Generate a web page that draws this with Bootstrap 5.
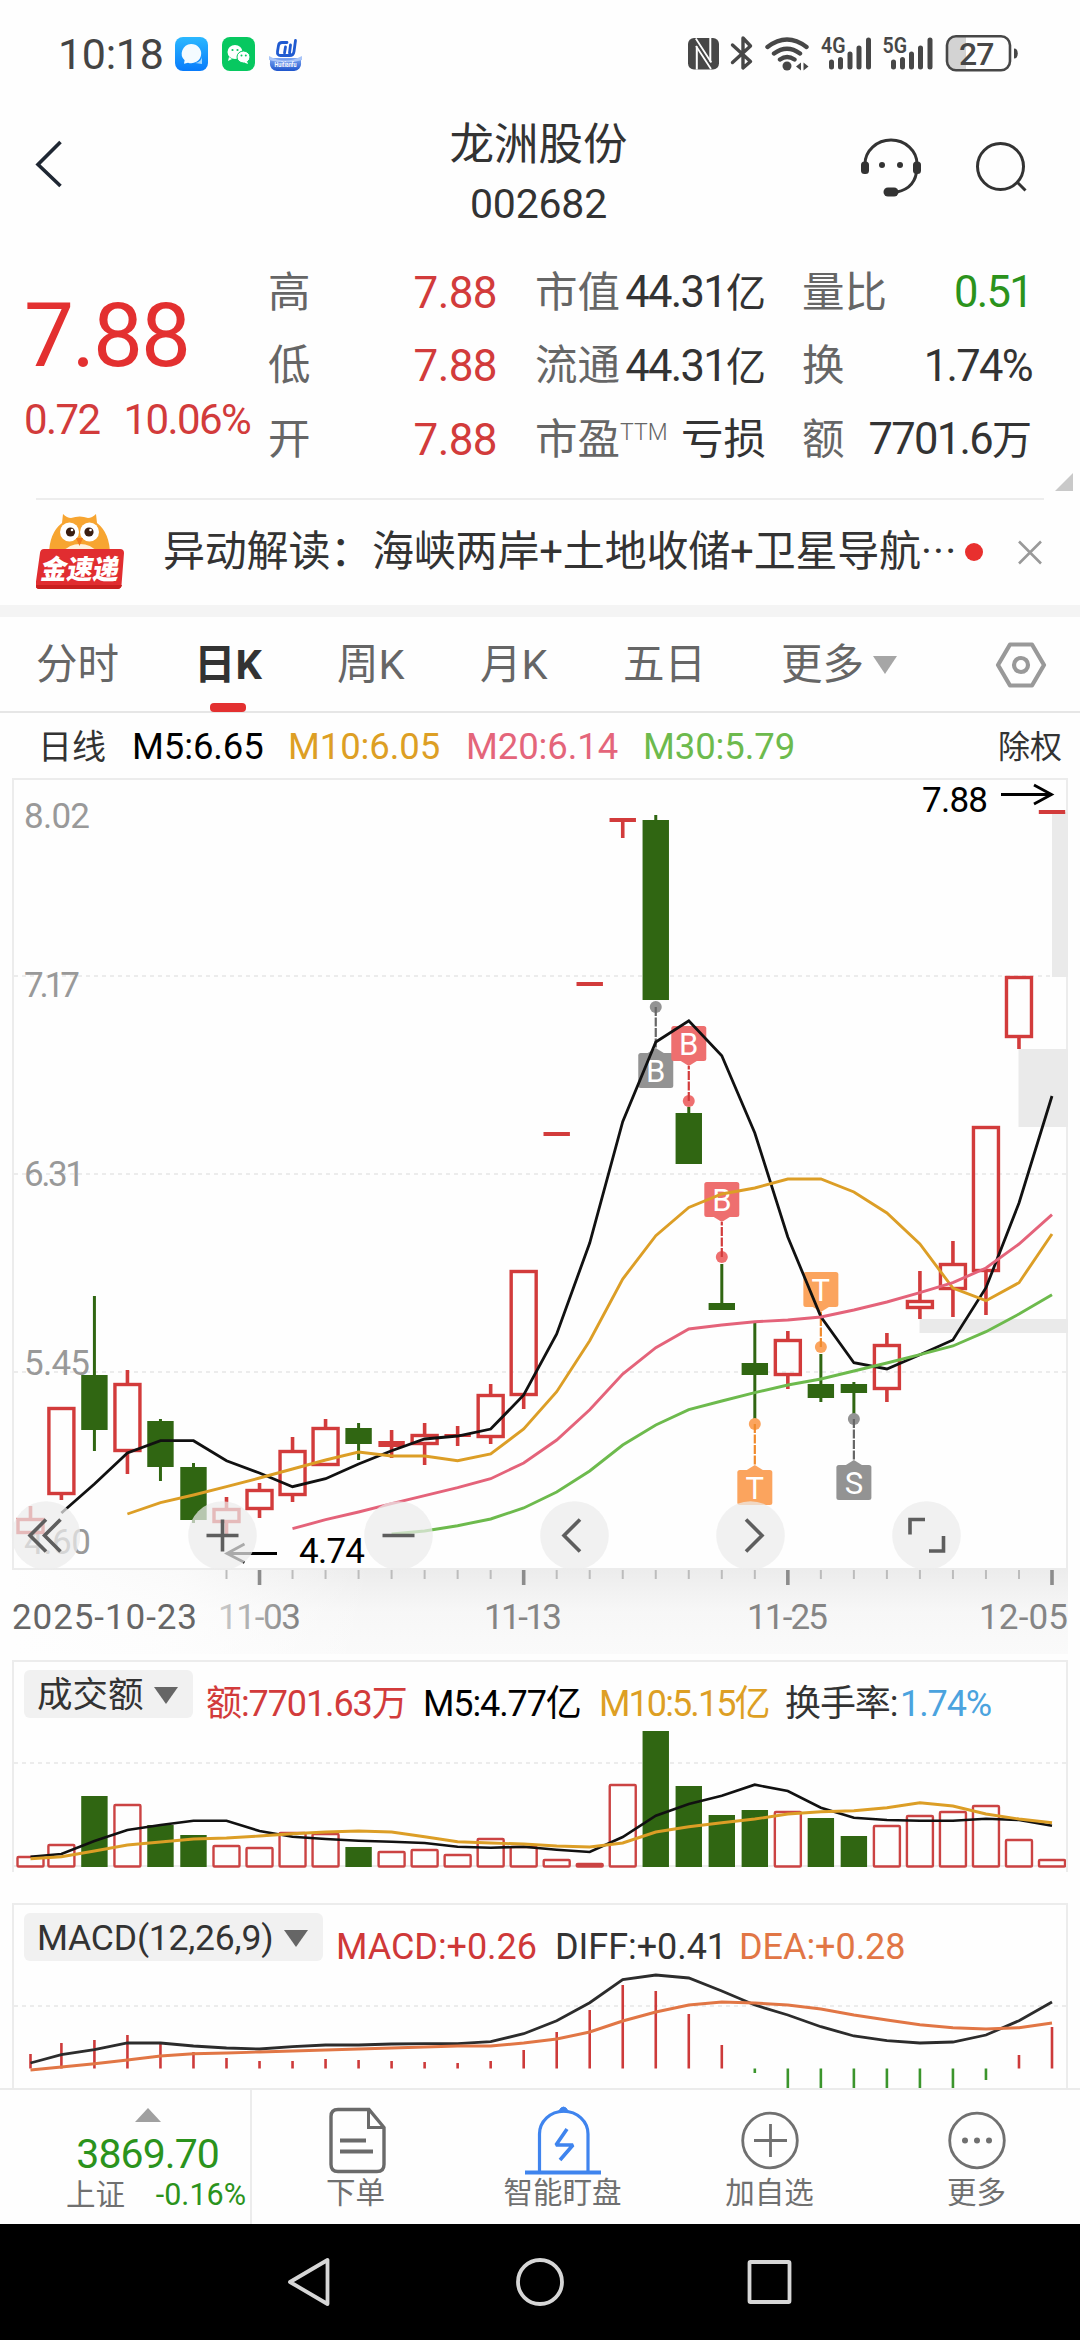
<!DOCTYPE html>
<html lang="zh-CN">
<head>
<meta charset="utf-8">
<title>龙洲股份 002682</title>
<meta name="viewport" content="width=device-width, initial-scale=1">
<link rel="stylesheet" href="https://cdn.jsdelivr.net/npm/bootstrap@5.3.0/dist/css/bootstrap.min.css">
<style>
  :root { --up:#d23b3b; --ink:#333; --dim:#666; --fall:#2b931c; }
  html, body { width:1080px; height:2340px; overflow:hidden; }
  body { font-family:Roboto,"Noto Sans CJK SC",sans-serif; color:var(--ink); background:#fefefe; line-height:1; }
  svg { display:block; flex:none; }
  svg text { font-family:Roboto,"Noto Sans CJK SC",sans-serif; }
  span { white-space:nowrap; }
  .c-up { color:var(--up); } .c-fall { color:var(--fall); } .c-dim { color:var(--dim); }
  .statusbar { height:108px; padding:0 60px 0 58px; color:#444; }
  .clock { font-size:43px; letter-spacing:-.3px; width:117px; }
  .titlebar { height:132px; }
  .stock-name { font-size:44.5px; line-height:64px; margin-top:5px; }
  .stock-code { font-size:41px; line-height:54px; letter-spacing:-.2px; }
  .quote { height:258px; padding:16px 46px 0 24px; }
  .price-col { width:244px; }
  .price-now { font-size:89px; line-height:90px; margin-top:35px; color:#e33030; letter-spacing:-2.2px; font-weight:400; }
  .price-chg { font-size:42px; line-height:46px; margin-top:16px; letter-spacing:-1.6px; gap:24px; }
  .q-row { height:73.5px; font-size:42.5px; }
  .q-row .val { font-size:43.5px; letter-spacing:-1.7px; }
  .q-row .qc1 .val { font-size:44px; letter-spacing:-.6px; }
  .q-row .val i { font-style:normal; font-size:40px; letter-spacing:0; }
  .qc1 { width:229px; margin-right:38px; } .qc2 { width:231px; margin-right:36px; } .qc3 { width:230px; margin-right:1px; }
  .ttm { font-size:23px; top:-14px; position:relative; font-weight:300; }
  .news { height:107px; margin:0 36px; border-top:2px solid #ededed; padding-bottom:1px; }
  .news-text { font-size:42px; margin-left:38px; width:807px; letter-spacing:-.2px; }
  .news-text b { font-weight:400; letter-spacing:1.2px; }
  .band { height:12px; background:#f4f4f4; }
  .ktabs { height:96px; border-bottom:2px solid #e6e6e6; padding-left:36px; font-size:41.5px; color:var(--dim); }
  .ktab { height:100%; width:143px; padding-top:2px; }
  .ktab.first { width:158px; }
  .ktab.on { color:var(--ink); font-weight:700; }
  .ktab.on::after { content:""; position:absolute; left:16px; bottom:-1px; width:36px; height:9px; border-radius:4px; background:#e33030; }
  .malegend { height:65px; padding:3px 18px 0 38px; font-size:36.5px; letter-spacing:-.1px; }
  .panel { margin:0 12px 0 12px; border:2px solid #ececec; border-bottom:0; width:1056px; }
  .panel-vol { margin-top:6px; height:212px; }
  .panel-macd { margin-top:31px; height:185px; overflow:hidden; }
  .indlegend { height:64px; padding:8px 0 0 10px; font-size:36px; }
  .indlegend .readout { line-height:40px; padding-top:14px; margin-left:5px; }
  .pick { height:48px; background:#f1f1f1; border-radius:6px; padding:3px 15px 0 13px; font-size:35.5px; }
  .dock { height:136px; border-top:2px solid #ebebeb; }
  .index-box { width:252px; border-right:2px solid #ececec; }
  .dock-item { width:207px; font-size:29.5px; color:#707070; padding-top:15px; }
  .dock-item span { margin-top:2px; }
  .sysnav { height:116px; background:#000; padding-left:288px; }
</style>
</head>
<body>
<header class="statusbar d-flex align-items-center">
  <span class="clock">10:18</span>
  <svg width="130" height="34" viewBox="0 0 130 34">
    <defs>
      <linearGradient id="gb" x1="0" y1="0" x2="0" y2="1"><stop offset="0" stop-color="#2bb8ff"/><stop offset="1" stop-color="#087bfb"/></linearGradient>
      <linearGradient id="gs" x1="0" y1="0" x2="0" y2="1"><stop offset="0" stop-color="#7fa7f2"/><stop offset="1" stop-color="#1e55cc"/></linearGradient>
    </defs>
    <rect x="0" y="0" width="33" height="34" rx="8" fill="url(#gb)"/>
    <path d="M16 7a10 9.6 0 1 1-3 18.700l-4 1 .6-3.400A10 9.600 0 0 1 16 7z" fill="#f4fbff"/><path d="M27 18a7 7 0 0 1-7 8l7 1z" fill="#9fd6ff"/>
    <rect x="47" y="0" width="33" height="34" rx="8" fill="#07c860"/>
    <ellipse cx="60" cy="15" rx="7.500" ry="7" fill="#fff"/><path d="M54 20l-1 4 4-2z" fill="#fff"/>
    <ellipse cx="68.500" cy="20" rx="6.500" ry="6" fill="#fff" stroke="#07c860"/><path d="M72 24l1 3-4-1.500z" fill="#fff"/>
    <g fill="#07c860"><circle cx="57.500" cy="13" r="1.100"/><circle cx="62.500" cy="13" r="1.100"/><circle cx="66.500" cy="18.500" r="1"/><circle cx="70.800" cy="18.500" r="1"/></g>
    <path d="M95 21h31v5a7 7 0 0 1-7 8h-17a7 7 0 0 1-7-8z" fill="url(#gs)"/><path d="M94 19q16 9 33 0v4q-16 5-33 0z" fill="#a9c5f8"/>
    <path d="M112 5.500h-5q-3 0-3.500 3l-1 6q-.5 4 3 4h9q4 0 4.500-4l1.500-11M109.500 16l1-6M114.500 16l1-8" fill="none" stroke="#1f5ad0" stroke-width="2.800" stroke-linecap="round"/>
    <text x="99.500" y="29.500" font-size="7" fill="#fff" font-weight="700" textLength="22" lengthAdjust="spacingAndGlyphs">Huitianfu</text>
  </svg>
  <svg class="ms-auto" width="332" height="42" viewBox="688 33 332 42">
    <g fill="#474747">
      <rect x="688" y="38" width="31" height="31.500" rx="6"/>
      <circle cx="787" cy="66" r="4.500"/>
      <path d="M796 66.500l5-4v8zM808.500 66.500l-5-4v8z"/>
    </g>
    <path d="M696.800 69.500V46.500M710.300 38v23.500" stroke="#fefefe" stroke-width="2"/>
    <path d="M695.800 38.500l15.500 24M696 46l15 23" stroke="#fefefe" stroke-width="1.800"/>
    <g fill="none" stroke="#474747" stroke-linecap="round" stroke-linejoin="round">
      <path d="M732.500 45l18 16.500-7.500 6.500V38l7.500 8-18 16.500" stroke-width="3.400"/>
      <path d="M767.500 47q19.500-15 39 0M774 53.500q13-9.500 26 0M780 59.500q7-5 14.500 0" stroke-width="4.400"/>
      <g stroke-width="5"><path d="M831.500 67v-5M840.500 67v-7.500M850 67V54M859 67V48M868.500 67V40"/><path d="M893.500 67v-5M902.500 67v-7.500M911.500 67V54M920.500 67V48M930 67V40"/></g>
    </g>
    <g fill="#474747" font-size="22" font-weight="600"><text x="821" y="53" textLength="24.500" lengthAdjust="spacingAndGlyphs">4G</text><text x="882.500" y="53" textLength="24.500" lengthAdjust="spacingAndGlyphs">5G</text></g>
    <path d="M958 37h8v33h-8q-10 0-10-9V46q0-9 10-9z" fill="#d3d3d3"/>
    <rect x="947" y="36.200" width="63" height="34" rx="9" fill="none" stroke="#474747" stroke-width="2.600"/>
    <path d="M1014 48.500q3.800 0 3.800 5t-3.800 5z" fill="#474747"/>
    <text x="959" y="64.500" font-size="32" fill="#474747" font-weight="500" textLength="35.500">27</text>
  </svg>
</header>

<nav class="titlebar d-flex position-relative">
  <svg width="420" height="132" viewBox="0 108 420 132"><path d="M60.500 142L38 164.500 60.500 186" fill="none" stroke="#1f2733" stroke-width="3.600"/></svg>
  <div class="d-flex flex-column align-items-center" style="width:237px">
    <span class="stock-name">龙洲股份</span><span class="stock-code">002682</span>
  </div>
  <svg width="423" height="132" viewBox="657 108 423 132">
    <g fill="none" stroke="#333" stroke-width="3">
      <path d="M865 164a26 24 0 0 1 52 0v4q-1 20-20 24"/>
      <circle cx="1000.500" cy="166.500" r="23"/><path d="M1017 182l8.500 8.500"/>
    </g>
    <g fill="#333"><rect x="861" y="161.500" width="8" height="12.500" rx="3.500"/><rect x="913" y="161.500" width="8" height="12.500" rx="3.500"/><circle cx="882" cy="165" r="3"/><circle cx="900" cy="165" r="3"/><rect x="883.500" y="187.500" width="15" height="9" rx="4.500"/></g>
  </svg>
</nav>

<section class="quote d-flex position-relative">
  <div class="price-col">
    <div class="price-now">7.88</div>
    <div class="price-chg d-flex c-up"><span>0.72</span><span>10.06%</span></div>
  </div>
  <div class="flex-grow-1">
    <div class="q-row d-flex align-items-center">
      <div class="qc1 d-flex align-items-center justify-content-between"><span class="c-dim">高</span><span class="val c-up">7.88</span></div>
      <div class="qc2 d-flex align-items-center justify-content-between"><span class="c-dim">市值</span><span class="val">44.31<i>亿</i></span></div>
      <div class="qc3 d-flex align-items-center justify-content-between"><span class="c-dim">量比</span><span class="val c-fall">0.51</span></div>
    </div>
    <div class="q-row d-flex align-items-center">
      <div class="qc1 d-flex align-items-center justify-content-between"><span class="c-dim">低</span><span class="val c-up">7.88</span></div>
      <div class="qc2 d-flex align-items-center justify-content-between"><span class="c-dim">流通</span><span class="val">44.31<i>亿</i></span></div>
      <div class="qc3 d-flex align-items-center justify-content-between"><span class="c-dim">换</span><span class="val">1.74%</span></div>
    </div>
    <div class="q-row d-flex align-items-center">
      <div class="qc1 d-flex align-items-center justify-content-between"><span class="c-dim">开</span><span class="val c-up">7.88</span></div>
      <div class="qc2 d-flex align-items-center justify-content-between"><span class="c-dim">市盈<span class="ttm">TTM</span></span><span>亏损</span></div>
      <div class="qc3 d-flex align-items-center justify-content-between"><span class="c-dim">额</span><span class="val">7701.6<i>万</i></span></div>
    </div>
  </div>
  <svg class="position-absolute end-0 bottom-0" width="26" height="26" viewBox="0 0 26 26"><path d="M19 1v18H1z" fill="#c9c9c9"/></svg>
</section>

<section class="news d-flex align-items-center">
  <svg width="89" height="78" viewBox="37 514 89 78">
    <path d="M64 515q4 4 8 4 9-3 17 0 4 0 8-4l1 9q13 10 13 32H50q0-22 13-32z" fill="#f7a531"/>
    <path d="M64 553q6-8 17-8t17 8z" fill="#fff2dd"/>
    <circle cx="70.500" cy="533" r="9.500" fill="#fff"/><circle cx="90.500" cy="533" r="9.500" fill="#fff"/>
    <circle cx="71.500" cy="533" r="4.600" fill="#3a1d10"/><circle cx="90" cy="533" r="4.600" fill="#3a1d10"/><circle cx="73" cy="531" r="1.300" fill="#fff"/><circle cx="91.500" cy="531" r="1.300" fill="#fff"/>
    <path d="M77 539h7l-3.500 8z" fill="#f07b1e"/>
    <path d="M45 550h76q4 0 4 4l-2.500 32q-.5 4-4 4H40q-4 0-3.500-4l4.500-32q.5-4 4-4z" fill="#e12d30"/>
    <path d="M37 586h86q-1 4-4.500 4H40q-3 0-3-4z" fill="#c9201f"/>
    <text x="41" y="580" font-size="27" font-weight="900" fill="#fff" textLength="78" lengthAdjust="spacingAndGlyphs" transform="translate(102 0) skewX(-10)">金速递</text>
  </svg>
  <span class="news-text">异动解读：海峡两岸+土地收储+卫星导航<b>···</b></span>
  <svg width="80" height="30" viewBox="0 0 80 30"><circle cx="10" cy="15" r="9" fill="#e8302e"/><path d="M55 4.500l22 22M77 4.500l-22 22" stroke="#999" stroke-width="2.600"/></svg>
</section>
<div class="band"></div>

<nav class="ktabs d-flex align-items-center">
  <span class="ktab first d-flex align-items-center">分时</span>
  <span class="ktab on d-flex align-items-center position-relative">日K</span>
  <span class="ktab d-flex align-items-center">周K</span>
  <span class="ktab d-flex align-items-center">月K</span>
  <span class="ktab first d-flex align-items-center">五日</span>
  <span class="ktab d-flex align-items-center" style="width:214px">更多<svg class="ms-2" width="27" height="18" viewBox="0 0 27 18"><path d="M1 0h24L13 18z" fill="#a6a6a6"/></svg></span>
  <svg width="52" height="50" viewBox="994 640 52 50"><g fill="none" stroke="#999" stroke-width="4.200" stroke-linejoin="round"><path d="M1009 645.500h22l12 20.500-12 20.500h-22l-12-20.500z"/><circle cx="1020" cy="666" r="7" stroke-width="4.200"/></g></svg>
</nav>

<div class="malegend d-flex align-items-center">
  <span style="width:94px;font-size:34px">日线</span>
  <span class="text-black" style="width:156px">M5:6.65</span>
  <span style="width:178px;color:#dd9f24">M10:6.05</span>
  <span style="width:177px;color:#e4657a">M20:6.14</span>
  <span style="color:#6dba4d">M30:5.79</span>
  <span class="ms-auto" style="font-size:32px;letter-spacing:0">除权</span>
</div>

<svg id="kchart" width="1080" height="876" viewBox="0 778 1080 876">
  <defs>
    <linearGradient id="axv" x1="0" y1="0" x2="0" y2="1"><stop offset="0" stop-color="#ececec"/><stop offset=".5" stop-color="#f7f7f7"/><stop offset="1" stop-color="#fafafa"/></linearGradient>
    <linearGradient id="axh" x1="0" y1="0" x2="1" y2="0"><stop offset="0" stop-color="#fefefe"/><stop offset=".16" stop-color="#fefefe" stop-opacity=".75"/><stop offset=".34" stop-color="#fefefe" stop-opacity="0"/></linearGradient>
    <linearGradient id="fade" x1="0" y1="0" x2="1" y2="0"><stop offset="0" stop-color="#ccc"/><stop offset="1" stop-color="#808080"/></linearGradient>
  </defs>
</svg>

<section class="panel panel-vol">
  <div class="indlegend d-flex">
    <div class="pick d-flex align-items-center me-2"><span style="width:117px">成交额</span><svg width="24" height="17" viewBox="0 0 24 17"><path d="M0 0h24L12 17z" fill="#666"/></svg></div>
    <div class="readout d-flex" style="letter-spacing:-1.1px">
      <span class="c-up" style="width:217px">额:7701.63万</span>
      <span class="text-black" style="width:176px">M5:4.77亿</span>
      <span style="width:186px;color:#dd9f24;letter-spacing:-1.9px">M10:5.15亿</span>
      <span style="width:115px">换手率:</span><span style="color:#4ba3de">1.74%</span>
    </div>
  </div>
  <svg id="vchart" width="1052" height="146" viewBox="14 1726 1052 146"></svg>
</section>

<section class="panel panel-macd">
  <div class="indlegend d-flex">
    <div class="pick d-flex align-items-center me-2"><span style="width:247px;letter-spacing:-.2px">MACD(12,26,9)</span><svg width="24" height="17" viewBox="0 0 24 17"><path d="M0 0h24L12 17z" fill="#666"/></svg></div>
    <div class="readout d-flex" style="letter-spacing:-.05px">
      <span style="width:219px;color:#cf3838">MACD:+0.26</span>
      <span style="width:184px">DIFF:+0.41</span>
      <span style="color:#e17645">DEA:+0.28</span>
    </div>
  </div>
  <svg id="mchart" width="1052" height="119" viewBox="14 1969 1052 119"></svg>
</section>

<footer class="dock d-flex">
  <div class="index-box d-flex flex-column align-items-end">
    <svg width="115" height="14" style="margin-top:18px" viewBox="0 0 115 14"><path d="M13 0l13 14H0z" fill="#a0a0a0"/></svg>
    <span class="c-fall" style="font-size:41px;line-height:44px;margin:10px 31px 0 0;letter-spacing:-.9px">3869.70</span>
    <div class="d-flex align-items-center justify-content-between" style="width:180px;margin-top:4px;margin-right:4px"><span style="font-size:29.5px;color:#707070">上证</span><span class="c-fall" style="font-size:30.5px">-0.16%</span></div>
  </div>
  <div class="dock-item d-flex flex-column align-items-center">
    <svg width="80" height="72" viewBox="315 2105 80 72"><g fill="none" stroke="#6a6a6a" stroke-width="3.400"><path d="M337 2109.500h31l15 18v37q0 7-7 7h-39q-7 0-7-7v-48q0-7 7-7z"/><path d="M367.500 2109.500v18h15.500" stroke-width="3"/><path d="M339 2140.500h26M339 2151.500h33" stroke-width="4"/></g></svg><span>下单</span>
  </div>
  <div class="dock-item d-flex flex-column align-items-center">
    <svg width="80" height="72" viewBox="522 2105 80 72"><g fill="none" stroke="#3f84ee" stroke-width="3.200"><path d="M538.500 2171v-37a24 22.500 0 0 1 48.500 0v37"/><path d="M524 2172.500h76" stroke-width="4"/><path d="M566 2129l-11 16h17l-13 15" stroke-width="3.600" stroke-linejoin="bevel"/></g><path d="M557 2112l3-4q2.500-2 5 0l3 4z" fill="#3f84ee" stroke="#3f84ee"/></svg><span>智能盯盘</span>
  </div>
  <div class="dock-item d-flex flex-column align-items-center">
    <svg width="80" height="72" viewBox="729 2105 80 72"><g fill="none" stroke="#707070" stroke-width="2.800"><circle cx="769" cy="2140.500" r="27.300"/><path d="M753 2140.500h33M769.500 2124v33"/></g></svg><span>加自选</span>
  </div>
  <div class="dock-item d-flex flex-column align-items-center">
    <svg width="80" height="72" viewBox="936 2105 80 72"><circle cx="976" cy="2140.500" r="27.300" fill="none" stroke="#707070" stroke-width="2.800"/><g fill="#707070"><circle cx="964" cy="2140.500" r="3"/><circle cx="976" cy="2140.500" r="3"/><circle cx="988" cy="2140.500" r="3"/></g></svg><span>更多</span>
  </div>
</footer>
<nav class="sysnav d-flex align-items-center">
  <svg width="510" height="60" viewBox="288 2252 510 60"><g fill="none" stroke="#d6d6d6" stroke-width="3.800" stroke-linejoin="round"><path d="M327.500 2260v44L290 2282z"/><circle cx="540" cy="2282" r="22"/><rect x="749.500" y="2262" width="40" height="40" rx="1"/></g></svg>
</nav>

<script src="https://cdn.jsdelivr.net/npm/bootstrap@5.3.0/dist/js/bootstrap.bundle.min.js"></script>
<script>
const RED = '#d23b3b', GREEN = '#306612';
/* the first slot is nudged inward so that its body clears the frame */
const X = i => i === 0 ? 30.5 : 1052 - 33.02 * (31 - i);
const add = (id, markup) => document.getElementById(id).insertAdjacentHTML('beforeend', markup);
const grid = y => `<path d="M14 ${y}H1066" stroke="#e6e6e6" stroke-width="1.600" stroke-dasharray="4 4"/>`;
const line = (start, ys, color, w = 2.6) =>
  `<polyline points="${ys.map((y, k) => X(start + k).toFixed(1) + ',' + y).join(' ')}" fill="none" stroke="${color}" stroke-width="${w}"/>`;

/* direction, body top, body bottom, high, low */
const candles = [
  ['r',1518,1534,1506,1534],['r',1407,1495,1407,1500],['g',1375,1430,1296,1451],['r',1383,1452,1370,1474],
  ['g',1421,1467,1419,1481],['g',1467,1520,1463,1523],['r',1508,1523,1497,1535],['r',1489,1510,1483,1518],
  ['r',1450,1496,1437,1502],['r',1427,1466,1419,1466],['g',1428,1444,1423,1460],['f',1441,1447,1430,1458],
  ['r',1434,1445,1423,1465],['f',1434,1437,1426,1446],['r',1394,1438,1384,1444],['r',1270,1396,1270,1409],
  ['f',1132,1136,1132,1136],['f',982,986,982,986],['f',818,822,818,838],['g',820,1000,815,1000],
  ['g',1113,1164,1107,1164],['g',1303,1310,1264,1310],['g',1363,1375,1323,1419],['r',1339,1376,1331,1389],
  ['g',1384,1398,1354,1402],['g',1384,1393,1382,1414],['r',1344,1390,1333,1402],['r',1300,1309,1271,1319],
  ['r',1263,1290,1241,1317],['r',1126,1272,1126,1315],['r',976,1038,976,1049],['f',810,814,810,814]
];
let k = '<rect x="12" y="1569" width="1056" height="85" fill="url(#axv)"/><rect x="12" y="1570" width="1056" height="84" fill="url(#axh)"/>';
k += '<rect x="13" y="779" width="1054" height="790" fill="none" stroke="#ececec" stroke-width="2"/>';
k += [976,1174,1372].map(grid).join('');
k += '<g fill="#eaeaea"><rect x="1052" y="812" width="16" height="165"/><rect x="1018.500" y="1049" width="49.500" height="78"/><rect x="919.500" y="1319" width="148.500" height="14"/></g>';
k += '<g font-size="35" fill="#999">' + [['8.02',828,66],['7.17',997,56],['6.31',1186,61],['5.45',1375,66],['4.60',1554,67]]
  .map(([t, y, w]) => `<text x="24" y="${y}" textLength="${w}">${t}</text>`).join('') + '</g>';
candles.forEach(([c, t, b, h, l], i) => {
  const x = X(i), col = c === 'g' ? GREEN : RED, ww = c === 'g' ? 3 : 3.6;
  if (h < t) k += `<path d="M${x} ${h}V${t}" stroke="${col}" stroke-width="${ww}"/>`;
  if (l > b) k += `<path d="M${x} ${b}V${l}" stroke="${col}" stroke-width="${ww}"/>`;
  k += c === 'r'
    ? `<rect x="${x - 12.5}" y="${t + 1.5}" width="25" height="${b - t - 3}" fill="none" stroke="${RED}" stroke-width="3.400"/>`
    : `<rect x="${x - 13.2}" y="${t}" width="26.400" height="${b - t}" fill="${col}"/>`;
});
/* trade flags: x index, letter, colour, line colour, box top, dot y */
[[19,'B','#939393','#666',1053,1007],[20,'B','#ee6f6f','#d23b3b',1026,1101],[21,'B','#ee6f6f','#d23b3b',1182,1257],
 [24,'T','#fba45e','#f08a2c',1272,1347],[22,'T','#fba45e','#f08a2c',1470,1424],[25,'S','#939393','#666',1465,1419]]
.forEach(([i, ch, col, lc, top, dot]) => {
  const x = X(i), below = dot < top, e = below ? top - 5 : top + 40, base = below ? top : top + 35;
  k += `<circle cx="${x}" cy="${dot}" r="6" fill="${col}"/><path d="M${x} ${dot}V${e}" stroke="${lc}" stroke-width="2.200" stroke-dasharray="9 1.500"/>`
    + `<path d="M${x - 8} ${base}L${x} ${e}L${x + 8} ${base}z" fill="${col}"/><rect x="${x - 17.5}" y="${top}" width="35" height="35" rx="2.500" fill="${col}"/>`
    + `<text x="${x}" y="${top + 28.5}" font-size="31" fill="#fff" text-anchor="middle">${ch}</text>`;
});
k += line(1,[1513,1484,1453,1440.7,1440.7,1460.7,1473,1486.7,1478.7,1464,1450.7,1439,1436,1429,1395,1334,1243,1121.7,1042,1020.7,1055.7,1133,1237,1316.7,1362.7,1369,1354.7,1340,1287.7,1203,1096],'#111',2.8);
k += line(3,[1514,1502.7,1495,1486.7,1478,1469,1460,1452,1456,1456,1460.7,1454,1429,1391.7,1340.7,1279,1235.7,1207.5,1194,1188,1179,1179,1192,1213,1244,1288,1300.7,1282.7,1234],'#dc9e26',2.9);
k += line(8,[1528.7,1519.7,1512,1503.7,1495.7,1487.7,1478.7,1463,1440,1409.7,1374,1347.7,1329,1325,1321.7,1320,1317,1310,1302,1292.7,1282.7,1268,1244,1214.7],'#e4637a',2.9);
k += line(11,[1534,1531,1525.7,1519,1508,1492,1471,1445,1425,1409.7,1401,1392.7,1385,1379,1371,1363,1354.7,1346,1331.7,1314,1294.7],'#6dba4d',2.9);
k += '<g fill="none" stroke="#000" stroke-width="2.800"><path d="M1001 794.500h51M1034 785l17.500 9.500-17.500 9.500"/><path d="M227 1553.500h50M244.500 1544l-17.500 9.500 17.500 9"/></g>';
k += '<g font-size="35" fill="#000"><text x="922" y="812" textLength="66">7.88</text><text x="299" y="1563" textLength="66">4.74</text></g>';
for (let i = 6; i < 32; i++) k += i % 8 === 7
  ? `<path d="M${X(i)} 1570v15" stroke="#8c8c8c" stroke-width="3.600"/>`
  : `<path d="M${X(i)} 1570v9" stroke="#bcbcbc" stroke-width="2"/>`;
k += '<g font-size="35" fill="#858585"><text x="12" y="1629" textLength="185" fill="#666">2025-10-23</text><text x="218" y="1629" textLength="83" fill="url(#fade)">11-03</text><text x="484" y="1629" textLength="78">11-13</text><text x="747" y="1629" textLength="81">11-25</text><text x="979" y="1629" textLength="89">12-05</text></g>';
const icons = ['M46 1519.500l-16 16 16 16M60.500 1519.500l-16 16 16 16','M206.500 1535.500h32M222.500 1519.500v32','M382.500 1535.500h32',
  'M580 1519.500l-16 16 16 16','M746 1519.500l16 16-16 16','M925 1519.500h-15v15M929 1551h14.500v-15'];
[46,222.5,398.5,574.5,750.5,926.500].forEach((x, n) => {
  k += `<circle cx="${x}" cy="1535.500" r="34.300" fill="#ebebeb" fill-opacity=".72"/><path d="${icons[n]}" fill="none" stroke="#5e5e5e" stroke-width="3.600"/>`;
});
add('kchart', k);

/* turnover bars: top edges */
const vol = [1857,1845,1796,1805,1825,1835,1846,1848,1833,1834,1847,1852,1850,1855,1839,1847,1860,1864,1785,1731,1786,1815,1810,1812,1818,1836,1826,1816,1812,1806,1840,1860];
const volGreen = new Set([2,4,5,10,19,20,21,22,24,25]);
let v = '<path d="M14 1866H1066" stroke="#ececec" stroke-width="2"/>' + grid(1763);
vol.forEach((t, i) => {
  v += volGreen.has(i) ? `<rect x="${X(i) - 13.2}" y="${t}" width="26.400" height="${1867 - t}" fill="${GREEN}"/>`
    : `<rect x="${X(i) - 13}" y="${t}" width="26" height="${1866.5 - t}" rx="1" fill="none" stroke="#cb4343" stroke-width="2.400"/>`;
});
v += line(0,[1856.7,1854,1841,1830,1825,1820.7,1820.7,1831,1836.7,1839,1840.7,1841.7,1843,1846.7,1847.7,1846.7,1849.7,1852,1837,1815.7,1804,1795.7,1784.7,1791,1807.7,1817.7,1820,1820.7,1820.7,1818.7,1820,1825.7],'#111');
v += line(0,[1858.7,1856.7,1851,1845,1842,1839,1838,1836,1833.7,1832,1831,1832,1836.7,1841.7,1843,1844,1846,1847,1843,1832,1826.7,1822.7,1819,1814,1811.7,1810.7,1807.7,1802.7,1806,1814,1819,1822.7],'#dc9e26',2.9);
add('vchart', v);

/* MACD histogram: bar ends measured from the zero line at 2068.5 */
const hist = [2054,2043,2040,2035,2043,2052,2058,2061,2061,2059,2060,2061,2062,2063,2061,2050,2032,2010,1985,1991,2014,2045,2073,2090,2090,2090,2090,2090,2090,2080,2055,2027];
let m = grid(2006);
hist.forEach((y, i) => m += `<path d="M${X(i)} 2068.500V${y}" stroke="${y < 2068 ? '#cd3a3a' : '#3b952c'}" stroke-width="2.600"/>`);
m += line(0,[2063,2054.7,2049.7,2043,2043,2046,2048,2049,2046.7,2045,2045,2044,2043.7,2043.7,2041.7,2033.7,2020.7,2002.7,1979.7,1975,1978,1991,2005,2015,2026.7,2036,2040.7,2043,2042,2035,2020.7,2002],'#2c2c2c',2.8);
m += line(0,[2070,2067,2063.7,2060,2056,2053.7,2053,2052,2051,2050,2049,2048,2047,2046,2046,2043,2039,2032,2021,2012,2005,2002,2003,2005,2009,2015,2020,2024.7,2027.7,2029,2027.7,2023],'#e17645',2.9);
add('mchart', m);
</script>
</body>
</html>
